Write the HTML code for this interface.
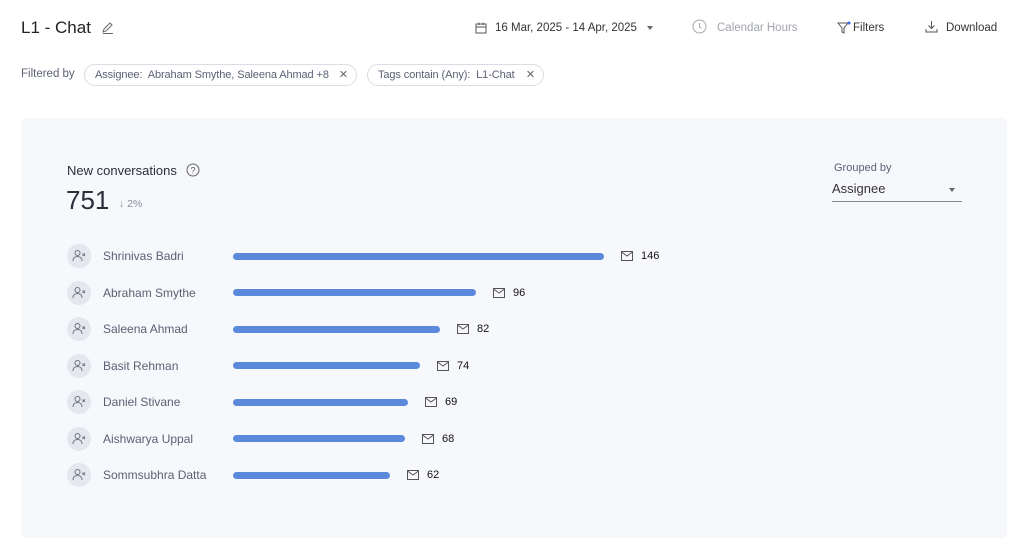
<!DOCTYPE html>
<html><head><meta charset="utf-8"><style>
*{margin:0;padding:0;box-sizing:border-box}
body{width:1024px;height:521px;background:#fff;font-family:"Liberation Sans",sans-serif;position:relative;overflow:hidden;color:#2b2f3a}
.a{position:absolute;white-space:nowrap}
.chip{position:absolute;top:64px;height:22px;border:1px solid #d9dde6;border-radius:11px;font-size:11px;color:#5a6172;line-height:20px;padding-left:10px;letter-spacing:-0.1px}
.panel{position:absolute;left:21px;top:118px;width:986px;height:420px;background:#f7f8fc;border-radius:4px}
.av{position:absolute;left:67px;width:24px;height:24px;border-radius:50%;background:#e4e7ee}
.nm{position:absolute;left:103px;font-size:12px;color:#5a6172}
.bar{position:absolute;left:233px;height:7px;border-radius:4px;background:#5b89dc}
.num{position:absolute;font-size:11px;color:#111}
</style></head><body>
<div class="a" style="left:21px;top:18px;font-size:17px;color:#222">L1 - Chat</div>
<svg class="a" style="left:101px;top:21px" width="14" height="14" viewBox="0 0 14 14" fill="none" stroke="#666" stroke-width="1"><path d="M2 11l1-3 6-6 2 2-6 6zM2 12.5h10"/></svg>
<svg class="a" style="left:475px;top:22px" width="12" height="12" viewBox="0 0 12 12" fill="none" stroke="#555"><rect x="1" y="2" width="10" height="9"/><path d="M1 5h10M4 0.5v2.5M8 0.5v2.5"/></svg>
<div class="a" style="left:495px;top:22px;font-size:11.5px;color:#333">16 Mar, 2025 - 14 Apr, 2025</div>
<div class="a" style="left:647px;top:26px;border:3.5px solid transparent;border-top:4px solid #666"></div>
<svg class="a" style="left:692px;top:19px" width="15" height="15" viewBox="0 0 15 15" fill="none" stroke="#aaa"><circle cx="7.5" cy="7.5" r="6.5"/><path d="M7.5 4v4l2 1.5"/></svg>
<div class="a" style="left:717px;top:22px;font-size:11.5px;color:#a0a4ac">Calendar Hours</div>
<svg class="a" style="left:837px;top:21px" width="14" height="14" viewBox="0 0 14 14" fill="none" stroke="#555"><path d="M1 2h10l-4 5v5l-2-1V7z"/><circle cx="12" cy="2" r="1.5" fill="#3b6fe0" stroke="none"/></svg>
<div class="a" style="left:853px;top:22px;font-size:11.5px;color:#333">Filters</div>
<svg class="a" style="left:925px;top:20px" width="13" height="13" viewBox="0 0 13 13" fill="none" stroke="#555"><path d="M6.5 1v7M3.5 5.5l3 3 3-3M1 9v3h11V9"/></svg>
<div class="a" style="left:946px;top:22px;font-size:11.5px;color:#333">Download</div>
<div class="a" style="left:21px;top:68px;font-size:11.5px;color:#5a6172">Filtered by</div>
<div class="chip" style="left:84px;width:273px">Assignee:&nbsp; Abraham Smythe, Saleena Ahmad +8 <span style="position:absolute;right:8px;color:#666">✕</span></div>
<div class="chip" style="left:367px;width:177px">Tags contain (Any):&nbsp; L1-Chat <span style="position:absolute;right:8px;color:#666">✕</span></div>
<div class="panel"></div>
<div class="a" style="left:67px;top:163px;font-size:13px;color:#2b2f3a">New conversations</div>
<svg class="a" style="left:186px;top:163px" width="14" height="14" viewBox="0 0 14 14" fill="none" stroke="#666"><circle cx="7" cy="7" r="6"/><text x="7" y="10.5" font-size="9" text-anchor="middle" fill="#666" stroke="none" font-family="Liberation Sans">?</text></svg>
<div class="a" style="left:66px;top:185px;font-size:26px;color:#2b2f3a">751</div>
<div class="a" style="left:119px;top:198px;font-size:10.5px;color:#8a8f9a">↓ 2%</div>
<div class="a" style="left:834px;top:162px;font-size:11px;color:#5a6172">Grouped by</div>
<div class="a" style="left:832px;top:181px;font-size:13px;color:#333">Assignee</div>
<div class="a" style="left:949px;top:188px;border:3.5px solid transparent;border-top:4px solid #666"></div>
<div class="a" style="left:832px;top:201px;width:130px;height:1px;background:#888"></div>
<div id="rows"></div>
<script>
var d=[["Shrinivas Badri",604,146],["Abraham Smythe",476,96],["Saleena Ahmad",440,82],["Basit Rehman",420,74],["Daniel Stivane",408,69],["Aishwarya Uppal",405,68],["Sommsubhra Datta",390,62]];
var h="";d.forEach(function(r,i){var y=256+i*36.5;
h+='<div class="av" style="top:'+(y-12)+'px"><svg width="24" height="24" viewBox="0 0 24 24" fill="none" stroke="#6b7280" stroke-width="1"><circle cx="10.5" cy="9" r="2.5"/><path d="M6 17c0-3 2-4.5 4.5-4.5s4.5 1.5 4.5 4.5M15.5 9.5l2.5 2.5M18 9.5l-2.5 2.5"/></svg></div>';
h+='<div class="nm" style="top:'+(y-7)+'px">'+r[0]+'</div>';
h+='<div class="bar" style="top:'+(y-3.5)+'px;width:'+(r[1]-233)+'px"></div>';
h+='<svg class="a" style="left:'+(r[1]+17)+'px;top:'+(y-5)+'px" width="12" height="10" viewBox="0 0 12 10" fill="none" stroke="#555"><rect x="0.5" y="0.5" width="11" height="9"/><path d="M0.5 1l5.5 4 5.5-4"/></svg>';
h+='<div class="num" style="left:'+(r[1]+37)+'px;top:'+(y-6)+'px">'+r[2]+'</div>';});
document.getElementById("rows").innerHTML=h;
</script>
</body></html>
